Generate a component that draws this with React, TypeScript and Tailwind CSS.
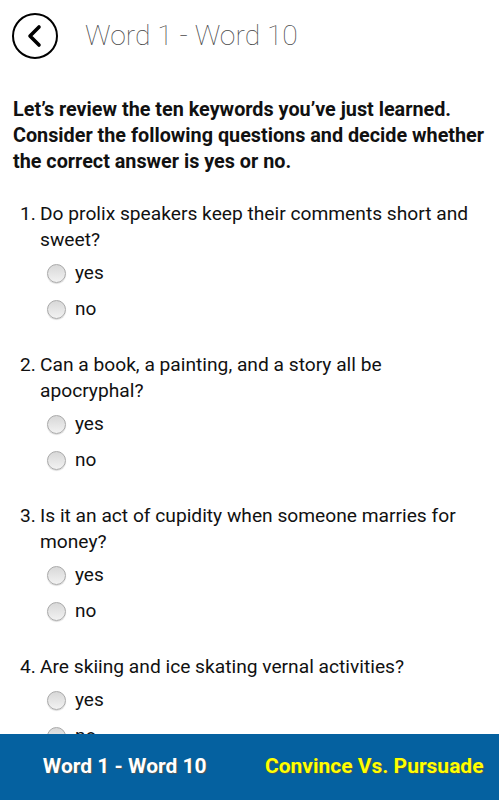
import React from 'react';

const questions = [
  'Do prolix speakers keep their comments short and sweet?',
  'Can a book, a painting, and a story all be apocryphal?',
  'Is it an act of cupidity when someone marries for money?',
  'Are skiing and ice skating vernal activities?',
  'Is a garrulous person a good listener?',
];

const Radio = ({ label }: { label: string }) => (
  <label className="flex h-[36px] items-center pl-[47px]">
    <span className="h-[19px] w-[19px] rounded-full border border-[#a9a9a9] bg-gradient-to-b from-[#d8d8d8] to-[#f2f2f2] shadow-[0_1px_1px_rgba(0,0,0,0.15)]" />
    <span className="ml-[9px] text-[19px] text-[#111]">{label}</span>
  </label>
);

export default function App() {
  return (
    <div className="min-h-screen bg-white pb-[80px] text-black" style={{ fontFamily: 'Roboto, "Liberation Sans", sans-serif' }}>
      {/* Header */}
      <div className="flex h-[72px] items-center pl-[12px]">
        <button className="flex h-[46px] w-[46px] items-center justify-center rounded-full border-[2.5px] border-black" aria-label="Back">
          <svg width="22" height="24" viewBox="0 0 22 24" fill="none">
            <path d="M15 3 L6 12 L15 21" stroke="#000" strokeWidth="3.6" strokeLinecap="round" strokeLinejoin="round" />
          </svg>
        </button>
        <h1 className="ml-[27px] text-[28.3px] text-[#4a4a4a]" style={{ fontWeight: 100 }}>
          Word 1 - Word 10
        </h1>
      </div>

      {/* Intro */}
      <p className="mt-[25px] px-[13px] text-[19.8px] font-bold leading-[26px] text-[#111]">
        Let’s review the ten keywords you’ve just learned. Consider the following questions and decide whether the correct answer is yes or no.
      </p>

      {/* Questions */}
      <ol className="mt-[26px] pl-[20px] pr-[12px]">
        {questions.map((q, i) => (
          <li key={i} className="mb-[25px]">
            <div className="flex text-[19.2px] leading-[26px] text-[#111]">
              <span className="w-[20px] shrink-0">{i + 1}.</span>
              <span>{q}</span>
            </div>
            <div className="mt-[2px] -ml-[20px]">
              <Radio label="yes" />
              <Radio label="no" />
            </div>
          </li>
        ))}
      </ol>

      {/* Footer */}
      <div className="fixed bottom-0 left-0 right-0 grid h-[66px] grid-cols-2 items-center bg-[#0561a0] text-[21px] font-bold [text-shadow:1px_1px_1px_#555]">
        <span className="text-center text-white">Word 1 - Word 10</span>
        <span className="text-center text-[#ffff00]">Convince Vs. Pursuade</span>
      </div>
    </div>
  );
}
